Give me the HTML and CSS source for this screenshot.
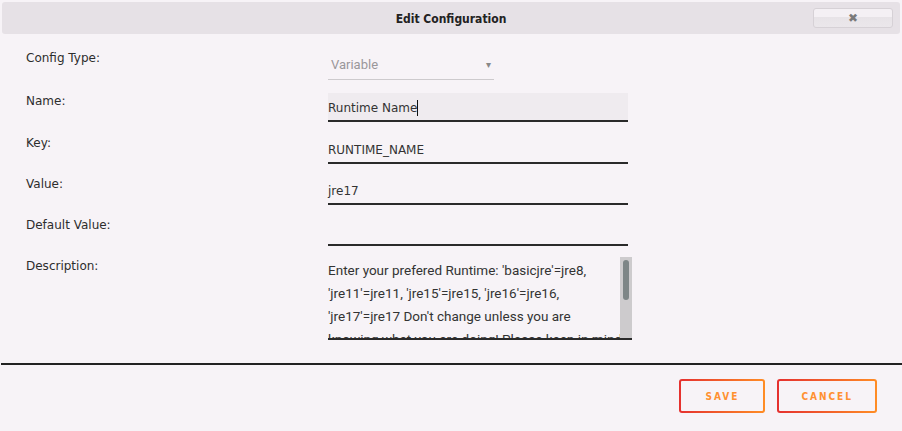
FILE: index.html
```html
<!DOCTYPE html>
<html lang="en">
<head>
    <meta charset="UTF-8">
    <title>Edit Configuration</title>
    <link rel="stylesheet" href="styles.css">
</head>
<body>
    <div class="dialog">
        <div class="dialog-header">
            <span class="dialog-title">Edit Configuration</span>
            <button class="close-button">&#10006;</button>
        </div>
        <div class="dialog-body">
            <div class="form-row first">
                <label>Config Type:</label>
                <div class="select-field">
                    <span>Variable</span>
                    <span class="select-arrow">&#9662;</span>
                </div>
            </div>
            <div class="form-row second">
                <label>Name:</label>
                <div class="text-field focused"><span>Runtime Name</span><span class="caret"></span></div>
            </div>
            <div class="form-row">
                <label>Key:</label>
                <div class="text-field">RUNTIME_NAME</div>
            </div>
            <div class="form-row">
                <label>Value:</label>
                <div class="text-field">jre17</div>
            </div>
            <div class="form-row">
                <label>Default Value:</label>
                <div class="text-field"></div>
            </div>
            <div class="form-row">
                <label>Description:</label>
                <div class="text-area">
                    <div class="text-area-content">Enter your prefered Runtime: 'basicjre'=jre8,<br>'jre11'=jre11, 'jre15'=jre15, 'jre16'=jre16,<br>'jre17'=jre17 Don't change unless you are<br>knowing what you are doing! Please keep in mind</div>
                    <div class="scrollbar"><div class="scroll-thumb"></div></div>
                </div>
            </div>
        </div>
        <div class="dialog-footer">
            <button class="outline-button">SAVE</button>
            <button class="outline-button">CANCEL</button>
        </div>
    </div>
</body>
</html>
```
FILE: styles.css
```css
body {
    margin: 0;
    background: #f7f3f7;
    font-family: 'DejaVu Sans', sans-serif;
    color: #2b2b2b;
}
.dialog {
    display: flex;
    flex-direction: column;
    height: 431px;
}
.dialog-header {
    position: relative;
    margin: 2px 2px 0 2px;
    height: 32px;
    background: #e6e1e6;
    border-radius: 3px;
    display: flex;
    align-items: center;
    justify-content: center;
}
.dialog-title {
    font-family: 'DejaVu Sans Condensed', 'DejaVu Sans', sans-serif;
    font-weight: bold;
    font-size: 12px;
    color: #222;
    margin-top: 1px;
}
.close-button {
    position: absolute;
    top: 6px;
    right: 7px;
    width: 80px;
    height: 20px;
    border: 1px solid #d6d1d6;
    border-radius: 3px;
    background: linear-gradient(#f4f0f4 45%, #e7e3e7 45%, #ebe7eb);
    color: #7a7a7a;
    font-size: 12px;
    padding: 0;
    cursor: pointer;
}
.dialog-body {
    margin-left: 1px;
    padding: 16px 0 0 25px;
    height: 331px;
    box-sizing: border-box;
    border-bottom: 2px solid #222;
}
.form-row {
    display: flex;
    align-items: flex-start;
    height: 41px;
}
.form-row.first {
    height: 43px;
}
.form-row.second {
    height: 42px;
}
.form-row label {
    width: 302px;
    font-size: 12px;
    padding-top: 1px;
    color: #2d2d2d;
}
.select-field {
    width: 166px;
    height: 30px;
    box-sizing: border-box;
    border-bottom: 1px solid #cdcacd;
    display: flex;
    align-items: center;
    justify-content: space-between;
    padding: 0 3px 0 3px;
    font-family: Roboto, sans-serif;
    font-size: 13px;
    color: #9a979a;
}
.select-arrow {
    font-size: 10px;
    color: #888;
}
.text-field {
    width: 300px;
    height: 29px;
    box-sizing: border-box;
    border-bottom: 2px solid #2a2a2a;
    display: flex;
    align-items: center;
    padding-top: 2px;
    font-size: 12px;
    color: #333;
}
.text-field.focused {
    background: #efebef;
}
.caret {
    width: 1px;
    height: 16px;
    background: #111;
}
.text-area {
    width: 304px;
    display: flex;
    height: 81px;
    margin-top: -1px;
    border-bottom: 2px solid #2a2a2a;
    overflow: hidden;
}
.text-area-content {
    flex: 1;
    padding: 2px 0 0 0;
    font-family: Roboto, sans-serif;
    font-size: 13.5px;
    line-height: 23px;
    white-space: nowrap;
    overflow: hidden;
    color: #333;
}
.scrollbar {
    width: 12px;
    background: #cdcbcd;
    padding: 3px 3px 0 3px;
    box-sizing: border-box;
}
.scroll-thumb {
    height: 40px;
    border-radius: 3px;
    background: #7e8687;
}
.dialog-footer {
    display: flex;
    justify-content: flex-end;
    gap: 12px;
    padding: 14px 25px 0 0;
}
.outline-button {
    height: 34px;
    min-width: 86px;
    padding: 0 22px;
    border: 2px solid transparent;
    border-radius: 3px;
    background: linear-gradient(#f7f3f7, #f7f3f7) padding-box, linear-gradient(90deg, #e5302f, #ff8d25) border-box;
    color: #ff9030;
    font-family: 'DejaVu Sans Condensed', 'DejaVu Sans', sans-serif;
    font-weight: bold;
    font-size: 10px;
    letter-spacing: 2px;
    cursor: pointer;
}
```
